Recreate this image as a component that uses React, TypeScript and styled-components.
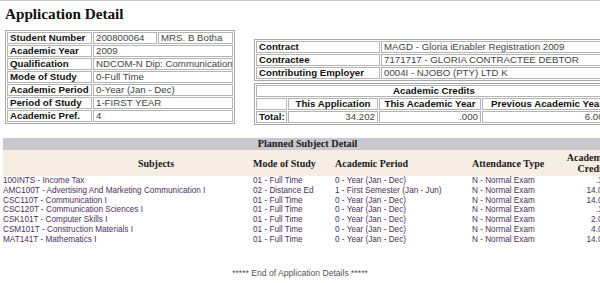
import React from 'react';
import styled, { createGlobalStyle } from 'styled-components';

const GlobalStyle = createGlobalStyle`
  html, body {
    margin: 0;
    padding: 0;
    overflow: hidden;
    background: #ffffff;
  }
`;

const Page = styled.div`
  width: 620px;
  border-top: 1px solid #c8c8c8;
  font-family: 'Liberation Sans', Arial, sans-serif;
`;

const Title = styled.h1`
  margin: 0;
  padding: 4px 0 0 5px;
  height: 25px;
  font-family: 'Liberation Serif', 'Times New Roman', serif;
  font-size: 15.2px;
  font-weight: bold;
  color: #111;
`;

const TopRow = styled.div`
  display: flex;
  align-items: flex-start;
  gap: 19px;
  padding-left: 5px;
`;

const RightColumn = styled.div`
  display: flex;
  flex-direction: column;
  gap: 2px;
  margin-top: 9px;
  width: 360px;
`;

const InfoTable = styled.table<{ $width?: number }>`
  border-collapse: separate;
  border-spacing: 1px;
  border: 1px solid #a8a8a8;
  width: ${(p) => (p.$width ? `${p.$width}px` : '100%')};
  table-layout: fixed;
  font-size: 9.7px;
`;

const Label = styled.td<{ $w?: number }>`
  border: 1px solid #b4b4b4;
  padding: 0 2px;
  height: 10px;
  line-height: 10px;
  font-weight: bold;
  color: #111;
  white-space: nowrap;
  overflow: hidden;
  ${(p) => (p.$w ? `width: ${p.$w}px;` : '')}
`;

const Value = styled.td<{ $align?: string; $w?: number }>`
  border: 1px solid #b4b4b4;
  padding: 0 2px;
  height: 10px;
  line-height: 10px;
  color: #444;
  white-space: nowrap;
  overflow: hidden;
  text-align: ${(p) => p.$align || 'left'};
  ${(p) => (p.$w ? `width: ${p.$w}px;` : '')}
`;

const HeadCell = styled.td`
  border: 1px solid #b4b4b4;
  padding: 0 2px;
  height: 10px;
  line-height: 10px;
  font-weight: bold;
  color: #111;
  text-align: center;
  white-space: nowrap;
  overflow: hidden;
`;

const SubjectTable = styled.table`
  margin: 13px 0 0 3px;
  border-collapse: collapse;
  table-layout: fixed;
  width: 609px;
`;

const Band = styled.th`
  background: #cbc7ce;
  height: 12px;
  padding: 0;
  line-height: 12px;
  font-family: 'Liberation Serif', 'Times New Roman', serif;
  font-size: 10.2px;
  font-weight: bold;
  color: #1a1a1a;
  text-align: center;
`;

const ColHead = styled.th<{ $align?: string; $pad?: number }>`
  background: #f6ede4;
  height: 26px;
  padding: 0 ${(p) => (p.$align === 'right' ? 3 : 0)}px 0 ${(p) => p.$pad || 0}px;
  font-family: 'Liberation Serif', 'Times New Roman', serif;
  font-size: 10px;
  line-height: 11px;
  font-weight: bold;
  color: #1a1a1a;
  text-align: ${(p) => p.$align || 'left'};
  vertical-align: middle;
`;

const Cell = styled.td<{ $align?: string }>`
  padding: 0 ${(p) => (p.$align === 'right' ? 5 : 0)}px 0 0;
  height: 9.8px;
  line-height: 9.8px;
  font-size: 8.2px;
  color: #4e2f5c;
  white-space: nowrap;
  overflow: hidden;
  text-align: ${(p) => p.$align || 'left'};
`;

const Footer = styled.div`
  margin-top: 23px;
  width: 600px;
  text-align: center;
  font-size: 8.6px;
  color: #555;
`;

const subjects = [
  ['100INTS - Income Tax', '01 - Full Time', '0 - Year (Jan - Dec)', 'N - Normal Exam', '.10'],
  ['AMC100T - Advertising And Marketing Communication I', '02 - Distance Ed', '1 - First Semester (Jan - Jun)', 'N - Normal Exam', '14.00'],
  ['CSC110T - Communication I', '01 - Full Time', '0 - Year (Jan - Dec)', 'N - Normal Exam', '14.00'],
  ['CSC120T - Communication Sciences I', '01 - Full Time', '0 - Year (Jan - Dec)', 'N - Normal Exam', '.10'],
  ['CSK101T - Computer Skills I', '01 - Full Time', '0 - Year (Jan - Dec)', 'N - Normal Exam', '2.00'],
  ['CSM101T - Construction Materials I', '01 - Full Time', '0 - Year (Jan - Dec)', 'N - Normal Exam', '4.00'],
  ['MAT141T - Mathematics I', '01 - Full Time', '0 - Year (Jan - Dec)', 'N - Normal Exam', '14.00'],
];

const studentRows = [
  ['Academic Year', '2009'],
  ['Qualification', 'NDCOM-N Dip: Communication'],
  ['Mode of Study', '0-Full Time'],
  ['Academic Period', '0-Year (Jan - Dec)'],
  ['Period of Study', '1-FIRST YEAR'],
  ['Academic Pref.', '4'],
];

const App: React.FC = () => {
  return (
    <Page>
      <GlobalStyle />
      <Title>Application Detail</Title>
      <TopRow>
        <InfoTable $width={230}>
          <tbody>
            <tr>
              <Label $w={79}>Student Number</Label>
              <Value $w={58}>200800064</Value>
              <Value>MRS. B Botha</Value>
            </tr>
            {studentRows.map(([label, value]) => (
              <tr key={label}>
                <Label>{label}</Label>
                <Value colSpan={2}>{value}</Value>
              </tr>
            ))}
          </tbody>
        </InfoTable>
        <RightColumn>
          <InfoTable>
            <tbody>
              <tr>
                <Label $w={118}>Contract</Label>
                <Value>MAGD - Gloria iEnabler Registration 2009</Value>
              </tr>
              <tr>
                <Label>Contractee</Label>
                <Value>7171717 - GLORIA CONTRACTEE DEBTOR</Value>
              </tr>
              <tr>
                <Label>Contributing Employer</Label>
                <Value>0004I - NJOBO (PTY) LTD K</Value>
              </tr>
            </tbody>
          </InfoTable>
          <InfoTable>
            <colgroup>
              <col style={{ width: 31 }} />
              <col style={{ width: 90 }} />
              <col style={{ width: 102 }} />
              <col />
            </colgroup>
            <tbody>
              <tr>
                <HeadCell colSpan={4}>Academic Credits</HeadCell>
              </tr>
              <tr>
                <HeadCell></HeadCell>
                <HeadCell>This Application</HeadCell>
                <HeadCell>This Academic Year</HeadCell>
                <HeadCell>Previous Academic Year</HeadCell>
              </tr>
              <tr>
                <Label>Total:</Label>
                <Value $align="right">34.202</Value>
                <Value $align="right">.000</Value>
                <Value $align="right">6.000</Value>
              </tr>
            </tbody>
          </InfoTable>
        </RightColumn>
      </TopRow>
      <SubjectTable>
        <colgroup>
          <col style={{ width: 250 }} />
          <col style={{ width: 82 }} />
          <col style={{ width: 137 }} />
          <col style={{ width: 85 }} />
          <col style={{ width: 55 }} />
        </colgroup>
        <thead>
          <tr>
            <Band colSpan={5}>Planned Subject Detail</Band>
          </tr>
          <tr>
            <ColHead $align="center" $pad={56}>Subjects</ColHead>
            <ColHead>Mode of Study</ColHead>
            <ColHead>Academic Period</ColHead>
            <ColHead>Attendance Type</ColHead>
            <ColHead $align="right">Academic Credits</ColHead>
          </tr>
        </thead>
        <tbody>
          {subjects.map((row) => (
            <tr key={row[0]}>
              <Cell>{row[0]}</Cell>
              <Cell>{row[1]}</Cell>
              <Cell>{row[2]}</Cell>
              <Cell>{row[3]}</Cell>
              <Cell $align="right">{row[4]}</Cell>
            </tr>
          ))}
        </tbody>
      </SubjectTable>
      <Footer>***** End of Application Details *****</Footer>
    </Page>
  );
};

export default App;
